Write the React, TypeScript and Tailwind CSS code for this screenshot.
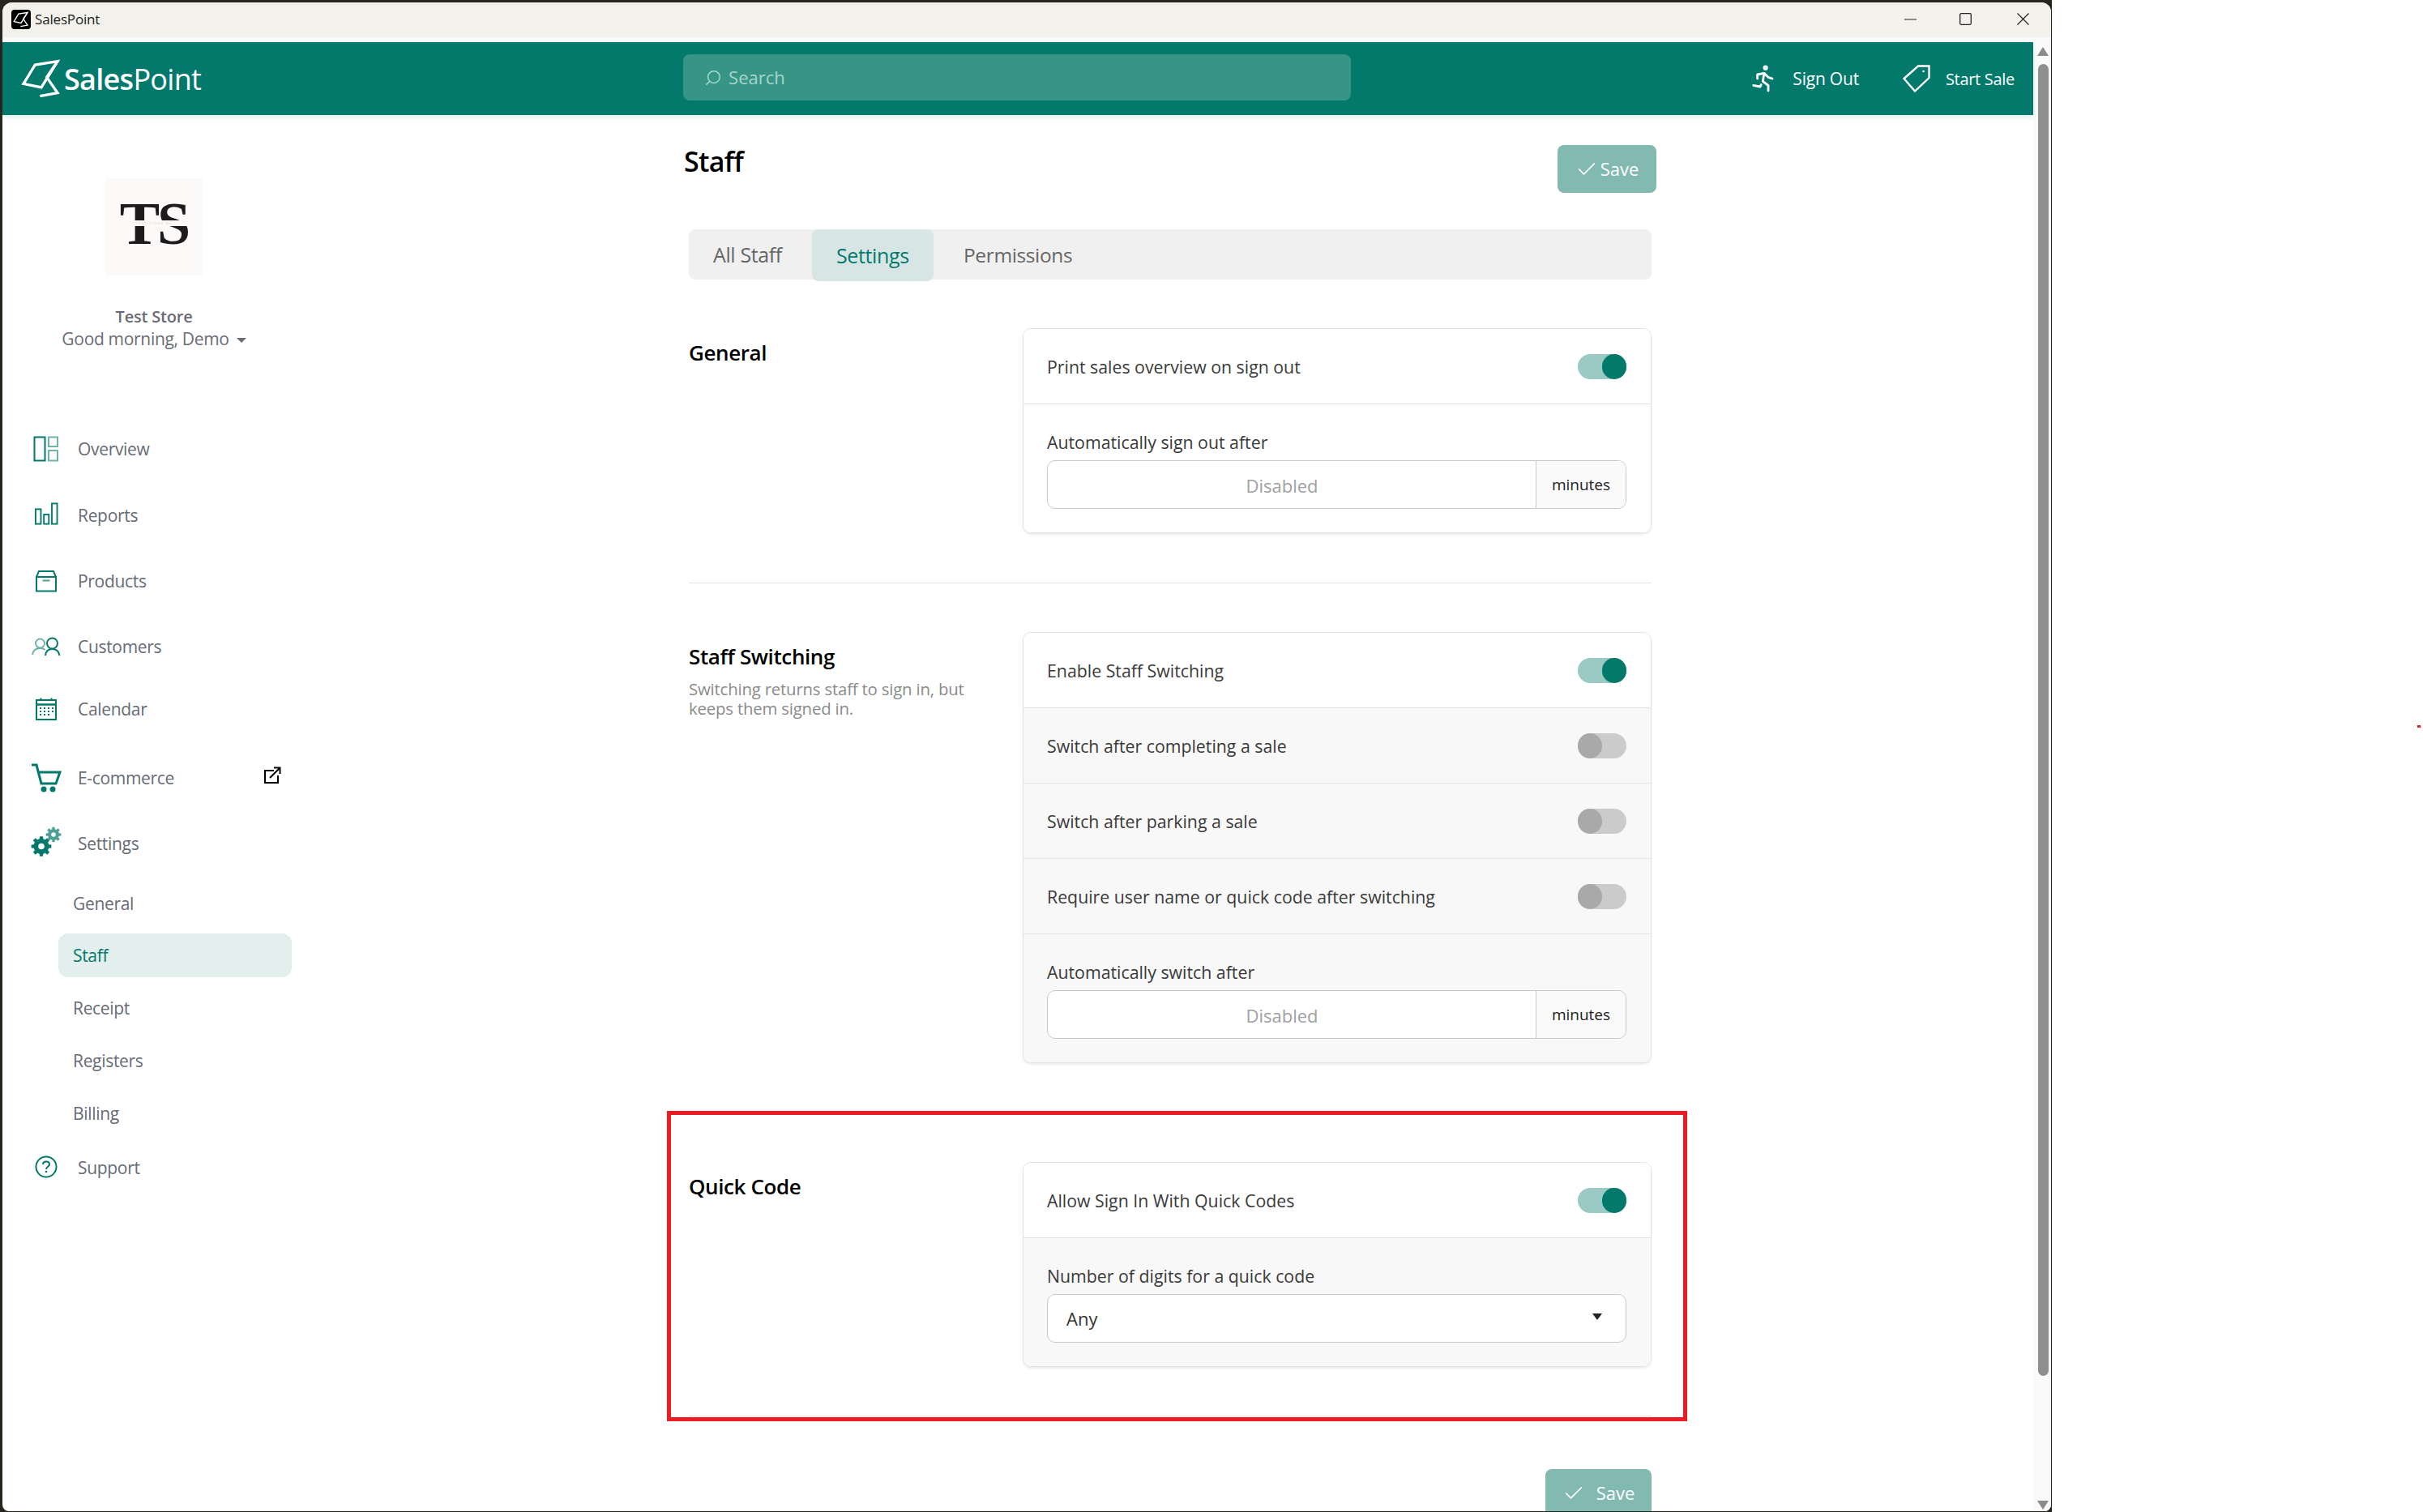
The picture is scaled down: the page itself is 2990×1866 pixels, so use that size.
import { Check, Search } from "lucide-react";
import { TbRun } from "react-icons/tb";

function LogoMark({ className }: { className?: string }) {
  return (
    <svg viewBox="75 222 150 150" fill="none" stroke="currentColor" strokeWidth="10" className={className}>
      <path d="M84 316 L127 246 L210 233 L150 330 Z" />
      <path d="M212 230 L170 292 L210 350 L145 362" />
    </svg>
  );
}

function Toggle({ on }: { on?: boolean }) {
  return (
    <div className={`flex h-[31px] w-[60px] rounded-full ${on ? "justify-end bg-[#9bc9c3]" : "justify-start bg-[#cbcbcb]"}`}>
      <div className={`h-full w-[30px] rounded-full ${on ? "bg-[#02796b]" : "bg-[#a9a9a9]"}`} />
    </div>
  );
}

function ToggleRow({ label, on, muted }: { label: string; on?: boolean; muted?: boolean }) {
  return (
    <div className={`flex h-[93px] items-center justify-between border-b border-[#e3e3e3] pl-[29px] pr-[30px] ${muted ? "bg-[#f8f8f8]" : "bg-white"}`}>
      <span className="pt-[2px] text-[21.3px] text-[#3a3a3a]">{label}</span>
      <Toggle on={on} />
    </div>
  );
}

function FieldLabel({ children }: { children: string }) {
  return <div className="mb-[7px] h-[30px] text-[21.3px] leading-[30px] text-[#3a3a3a]">{children}</div>;
}

function MinutesField({ label, muted }: { label: string; muted?: boolean }) {
  return (
    <div className={`pb-[29px] pl-[29px] pr-[30px] pt-[32px] ${muted ? "bg-[#f8f8f8]" : "bg-white"}`}>
      <FieldLabel>{label}</FieldLabel>
      <div className="flex h-[60px] overflow-hidden rounded-[10px] border border-[#c9c9c9] bg-white">
        <div className="flex flex-1 items-center justify-center pr-[24px] pt-[2px] text-[22px] text-[#a0a0a0]">Disabled</div>
        <div className="flex w-[111px] items-center justify-center border-l border-[#c9c9c9] bg-[#fafafa] text-[19px] text-[#222]">minutes</div>
      </div>
    </div>
  );
}

function Card({ children }: { children: React.ReactNode }) {
  return (
    <div className="w-[776px] overflow-hidden rounded-[10px] border border-[#e3e3e3] shadow-[0_2px_3px_rgba(0,0,0,0.08)]">
      {children}
    </div>
  );
}

function SaveButton({ className }: { className: string }) {
  return (
    <button className={`flex items-center justify-center bg-[#82b9b1] text-[22px] text-white ${className}`}>
      <Check size={28} strokeWidth={1.5} />
      <span>Save</span>
    </button>
  );
}

const teal = "#02796b";
const tealSoft = "#6fb3a9";

function OverviewIcon() {
  return (
    <svg width="32" height="32" viewBox="0 0 32 32" fill="none" strokeWidth="2">
      <rect x="1.5" y="1.5" width="13" height="29" stroke={teal} />
      <rect x="19" y="1.5" width="11" height="11.5" stroke={tealSoft} />
      <rect x="19" y="18" width="11" height="12.5" stroke={tealSoft} />
    </svg>
  );
}

function ReportsIcon() {
  return (
    <svg width="32" height="28" viewBox="0 0 32 30" fill="none" stroke={teal} strokeWidth="2" className="mb-[5px]">
      <rect x="2" y="9" width="7" height="19.5" />
      <rect x="13" y="16" width="6.5" height="12.5" />
      <rect x="23.5" y="1.5" width="7" height="27" />
    </svg>
  );
}

function ProductsIcon() {
  return (
    <svg width="28" height="28" viewBox="0 0 28 28" fill="none" stroke={teal} strokeWidth="2">
      <path d="M2 9 L5 2 H23 L26 9" />
      <rect x="2" y="9" width="24" height="17.5" />
      <path d="M9.5 13.5 H18.5" strokeOpacity="0.7" />
    </svg>
  );
}

function CustomersIcon() {
  return (
    <svg width="36" height="24" viewBox="0 0 36 24" fill="none" strokeWidth="2">
      <circle cx="10.5" cy="8" r="5.5" stroke={tealSoft} />
      <path d="M1 22 C2 16 6 14 10.5 14 C13 14 15 14.5 16.5 16" stroke={tealSoft} />
      <circle cx="25.5" cy="8" r="6.5" stroke={teal} />
      <path d="M17 23 C17.5 17 21 15 25.5 15 C30 15 33.5 17 34.5 23" stroke={teal} />
    </svg>
  );
}

function CalendarIcon() {
  const cells = ["6,12", "11,12", "16,12", "21,12", "6,16", "11,16", "16,16", "21,16", "6,20", "11,20", "16,20"];
  return (
    <svg width="28" height="28" viewBox="0 0 28 28" fill="none" stroke={teal} strokeWidth="2">
      <rect x="2" y="3" width="24" height="24" />
      <path d="M2 8.5 H26" strokeWidth="2.5" />
      <path d="M7.5 0.5 V4 M20.5 0.5 V4" />
      {cells.map((c) => {
        const [x, y] = c.split(",");
        return <rect key={c} x={x} y={y} width="2" height="2" fill={teal} stroke="none" />;
      })}
    </svg>
  );
}

function CartIcon() {
  return (
    <svg width="38" height="36" viewBox="0 0 38 36" fill="none" stroke={teal} strokeWidth="3">
      <path d="M1 2 H7 L13 25 H31 L36 11 H9" />
      <circle cx="16" cy="32" r="3.5" fill={teal} stroke="none" />
      <circle cx="27" cy="32" r="3.5" fill={teal} stroke="none" />
    </svg>
  );
}

// eight-toothed cog with a round hole, as one even-odd path
function gearPath(cx: number, cy: number, outer: number, root: number, hole: number) {
  const teeth = 8;
  const parts: string[] = [];
  for (let i = 0; i < teeth; i++) {
    const a = (i * Math.PI * 2) / teeth;
    const step = Math.PI / teeth;
    const pts: [number, number][] = [
      [root, a - step * 0.62],
      [outer, a - step * 0.42],
      [outer, a + step * 0.42],
      [root, a + step * 0.62],
    ];
    pts.forEach(([r, t]) => {
      const x = (cx + r * Math.cos(t)).toFixed(2);
      const y = (cy + r * Math.sin(t)).toFixed(2);
      parts.push(`${parts.length === 0 ? "M" : "L"}${x} ${y}`);
    });
  }
  parts.push("Z");
  parts.push(`M${cx - hole} ${cy} a${hole} ${hole} 0 1 0 ${hole * 2} 0 a${hole} ${hole} 0 1 0 ${-hole * 2} 0 Z`);
  return parts.join(" ");
}

function SettingsIcon() {
  return (
    <svg width="38" height="38" viewBox="0 0 38 38" className="mb-[6px]">
      <path d={gearPath(13, 25.5, 12.5, 9.5, 3.8)} fill={teal} fillRule="evenodd" />
      <path d={gearPath(28, 11, 9.5, 7, 2.8)} fill="#4ea094" fillRule="evenodd" />
    </svg>
  );
}

function SupportIcon() {
  return (
    <svg width="28" height="28" viewBox="0 0 28 28" fill="none" stroke={teal} strokeWidth="2">
      <circle cx="14" cy="14" r="12.5" />
      <path d="M10 11 C10 8.5 12 7.5 14 7.5 C16.5 7.5 18 9 18 11 C18 13.5 14 14 14 17" />
      <circle cx="14" cy="20" r="1.3" fill={teal} stroke="none" />
    </svg>
  );
}

function NavItem({ icon, label, height }: { icon: React.ReactNode; label: string; height: string }) {
  return (
    <div className={`flex items-center pl-[34px] ${height}`}>
      <div className="flex w-[40px] justify-center">{icon}</div>
      <span className="ml-[19px] pt-[2px] text-[21px] tracking-[-0.015em] text-[#666b76]">{label}</span>
    </div>
  );
}

function SubItem({ label, active }: { label: string; active?: boolean }) {
  return (
    <div className={`flex h-[54px] items-center rounded-[12px] pl-[18px] pt-[2px] text-[21px] tracking-[-0.015em] ${active ? "bg-[#e3efed] text-[#02796b]" : "text-[#666b76]"}`}>
      {label}
    </div>
  );
}

function Sidebar() {
  return (
    <aside className="w-[374px] shrink-0 pt-[78px]">
      <div className="relative mx-auto flex h-[120px] w-[120px] items-center justify-center bg-[#fbfaf9] pb-[8px] font-['Liberation_Serif',serif] text-[74px] font-bold leading-none tracking-[-0.04em] text-[#1d1b1b]">
        TS
        <div className="absolute left-0 right-0 top-[52px] flex h-[7px] items-center justify-center bg-[#fbfaf9] text-[4px] font-normal tracking-[0.3em] text-[#e8c9c9]">
          TEST STORE NZ
        </div>
      </div>
      <div className="mt-[37px] text-center text-[20px] font-semibold leading-[27px] tracking-[-0.01em] text-[#6b6b75]">Test Store</div>
      <div className="flex items-center justify-center text-[21px] leading-[28px] tracking-[-0.015em] text-[#6b6b75]">
        Good morning, Demo
        <span className="ml-[9px] mt-[3px] h-0 w-0 border-x-[6px] border-t-[6px] border-x-transparent border-t-[#6b6b75]" />
      </div>
      <nav className="mt-[81px]">
        <NavItem icon={<OverviewIcon />} label="Overview" height="h-[82px]" />
        <NavItem icon={<ReportsIcon />} label="Reports" height="h-[82px]" />
        <NavItem icon={<ProductsIcon />} label="Products" height="h-[80px]" />
        <NavItem icon={<CustomersIcon />} label="Customers" height="h-[82px]" />
        <NavItem icon={<CalendarIcon />} label="Calendar" height="h-[72px]" />
        <div className="relative">
          <NavItem icon={<CartIcon />} label="E-commerce" height="h-[98px]" />
          <svg width="22" height="22" viewBox="0 0 22 22" fill="none" stroke="black" strokeWidth="2" className="absolute left-[322px] top-[35px]">
            <path d="M13 5 H2 V20 H18 V11" />
            <path d="M8 14 L20 2 M13 1.5 H20.5 V9" />
          </svg>
        </div>
        <NavItem icon={<SettingsIcon />} label="Settings" height="h-[64px]" />
        <div className="ml-[69px] mt-[14.5px] flex w-[288px] flex-col gap-[10.7px]">
          <SubItem label="General" />
          <SubItem label="Staff" active />
          <SubItem label="Receipt" />
          <SubItem label="Registers" />
          <SubItem label="Billing" />
        </div>
        <div className="mt-[13px]">
          <NavItem icon={<SupportIcon />} label="Support" height="h-[54px]" />
        </div>
      </nav>
    </aside>
  );
}

function MainContent() {
  return (
    <main className="ml-[467px] w-[1200px] pt-[37px]">
      <div className="flex items-start justify-between">
        <h1 className="text-[34px] font-semibold leading-[40px] tracking-[-0.02em] text-black">Staff</h1>
        <SaveButton className="h-[59px] w-[122px] gap-[3px] rounded-[8px]" />
      </div>

      <div className="ml-[6px] w-[1188px]">
        <div className="mt-[45px] flex h-[62px] rounded-[8px] bg-[#f0f0f0] text-[25px] tracking-[-0.015em] text-[#666]">
          <div className="flex w-[152px] items-center pl-[30px] pt-[2px]">All Staff</div>
          <div className="flex h-[64px] w-[150px] items-center rounded-[8px] bg-[#d7e6e4] pl-[30px] pt-[2px] text-[#02796b]">Settings</div>
          <div className="flex items-center pl-[37px] pt-[2px] text-[24.5px]">Permissions</div>
        </div>

        <section className="mt-[60px] flex">
          <div className="w-[412px] pt-[13px]">
            <h2 className="text-[26px] font-semibold leading-[34px] tracking-[-0.015em] text-black">General</h2>
          </div>
          <Card>
            <ToggleRow label="Print sales overview on sign out" on />
            <MinutesField label="Automatically sign out after" />
          </Card>
        </section>

        <hr className="mt-[61px] border-[#e3e3e3]" />

        <section className="mt-[60px] flex">
          <div className="w-[412px] pt-[13px]">
            <h2 className="text-[26px] font-semibold leading-[34px] tracking-[-0.015em] text-black">Staff Switching</h2>
            <p className="mt-[12px] w-[360px] text-[20.4px] leading-[23.5px] tracking-[-0.01em] text-[#8a8a8a]">
              Switching returns staff to sign in, but keeps them signed in.
            </p>
          </div>
          <Card>
            <ToggleRow label="Enable Staff Switching" on />
            <ToggleRow label="Switch after completing a sale" muted />
            <ToggleRow label="Switch after parking a sale" muted />
            <ToggleRow label="Require user name or quick code after switching" muted />
            <MinutesField label="Automatically switch after" muted />
          </Card>
        </section>

        <hr className="mt-[60px] border-[#e3e3e3]" />

        <section className="mt-[61px] flex">
          <div className="w-[412px] pt-[13px]">
            <h2 className="text-[26px] font-semibold leading-[34px] tracking-[-0.015em] text-black">Quick Code</h2>
          </div>
          <Card>
            <ToggleRow label="Allow Sign In With Quick Codes" on />
            <div className="bg-[#f8f8f8] pb-[29px] pl-[29px] pr-[30px] pt-[32px]">
              <FieldLabel>Number of digits for a quick code</FieldLabel>
              <div className="flex h-[60px] items-center justify-between rounded-[10px] border border-[#c9c9c9] bg-white pl-[23px] pr-[29px] text-[22px] text-[#333]">
                Any
                <span className="mb-[4px] h-0 w-0 border-x-[6px] border-t-[8px] border-x-transparent border-t-[#222]" />
              </div>
            </div>
          </Card>
        </section>

        <hr className="mt-[60px] border-[#e3e3e3]" />

        <div className="mt-[65px] flex justify-end">
          <SaveButton className="h-[59px] w-[131px] gap-[14px] rounded-[8px]" />
        </div>
      </div>
    </main>
  );
}

export default function App() {
  return (
    <div className="relative flex h-[1866px] w-[2990px] overflow-hidden bg-white font-['Open_Sans',sans-serif]">
      <div className="h-full w-[2532px] bg-[#26251e] pb-[1px] pl-[3px] pr-[1px] pt-[3px]">
        <div className="flex h-full flex-col overflow-hidden rounded-b-[8px] rounded-t-[12px] bg-white">
          <div className="flex h-[43px] shrink-0 items-center bg-[#f3f1ec] pb-[2px]">
            <div className="ml-[11px] flex h-[24px] w-[24px] items-center justify-center rounded-[4px] bg-black text-white">
              <LogoMark className="h-[20px] w-[20px]" />
            </div>
            <span className="ml-[5px] text-[17px] tracking-[-0.01em] text-[#222]">SalesPoint</span>
            <div className="ml-auto flex items-center text-[#222]">
              <svg width="15" height="15" viewBox="0 0 15 15" stroke="currentColor" fill="none" className="mr-[53px]">
                <path d="M0 8 H15" />
              </svg>
              <svg width="15" height="15" viewBox="0 0 15 15" stroke="currentColor" fill="none" strokeWidth="1.3" className="mr-[56px]">
                <rect x="0.7" y="0.7" width="13.6" height="13.6" rx="1.5" />
              </svg>
              <svg width="15" height="15" viewBox="0 0 15 15" stroke="currentColor" fill="none" strokeWidth="1.2" className="mr-[27px]">
                <path d="M0.5 0.5 L14.5 14.5 M14.5 0.5 L0.5 14.5" />
              </svg>
            </div>
          </div>

          <div className="flex min-h-0 flex-1">
            <div className="flex min-w-0 flex-1 flex-col">
              <div className="h-[6px] shrink-0 bg-[#fafafa]" />
              <header className="z-10 flex h-[90px] shrink-0 items-center bg-[#02796b] text-white shadow-[0_3px_6px_rgba(2,121,107,0.12)]">
                <LogoMark className="ml-[23px] h-[50px] w-[50px]" />
                <span className="ml-[3px] pt-[2px] text-[36px] leading-none tracking-[-0.02em]">
                  <span className="font-semibold">Sales</span>Point
                </span>
                <div className="mb-[3px] ml-[595px] flex h-[57px] w-[824px] items-center rounded-[8px] bg-[#379586] pl-[26px] text-[22px] text-[#a5d5cd]">
                  <Search size={22} strokeWidth={1.7} className="-scale-x-100" />
                  <span className="ml-[8px]">Search</span>
                </div>
                <div className="ml-auto flex items-center">
                  <TbRun size={40} strokeWidth={1.7} />
                  <span className="ml-[15px] pt-[2px] text-[21px] tracking-[-0.01em]">Sign Out</span>
                  <svg width="34" height="34" viewBox="0 0 34 34" fill="none" stroke="currentColor" strokeWidth="2.4" className="ml-[54px]">
                    <path d="M1.5 17 L19 1.5 H32.5 V16 L15 32.5 Z" />
                    <circle cx="25.5" cy="8" r="1.3" fill="currentColor" stroke="none" />
                  </svg>
                  <span className="ml-[19px] mr-[23px] pt-[2px] text-[20px] tracking-[-0.015em]">Start Sale</span>
                </div>
              </header>
              <div className="flex min-h-0 flex-1 overflow-hidden">
                <Sidebar />
                <MainContent />
              </div>
            </div>

            <div className="flex w-[22px] shrink-0 flex-col items-center bg-[#fafafa] pl-[2px] pt-[12px]">
              <span className="h-0 w-0 border-x-[7px] border-b-[11px] border-x-transparent border-b-[#8a8a8a]" />
              <div className="mt-[10px] h-[1619px] w-[13px] rounded-full bg-[#8f8f8f]" />
              <span className="mb-[2px] mt-auto h-0 w-0 border-x-[7px] border-t-[11px] border-x-transparent border-t-[#8a8a8a]" />
            </div>
          </div>
        </div>
      </div>

      <div className="absolute left-[823px] top-[1371px] h-[383px] w-[1259px] border-[5px] border-[#ed1c24]" />
      <div className="absolute left-[2983px] top-[895px] h-[3px] w-[4px] bg-[#ed1c24]" />
    </div>
  );
}
